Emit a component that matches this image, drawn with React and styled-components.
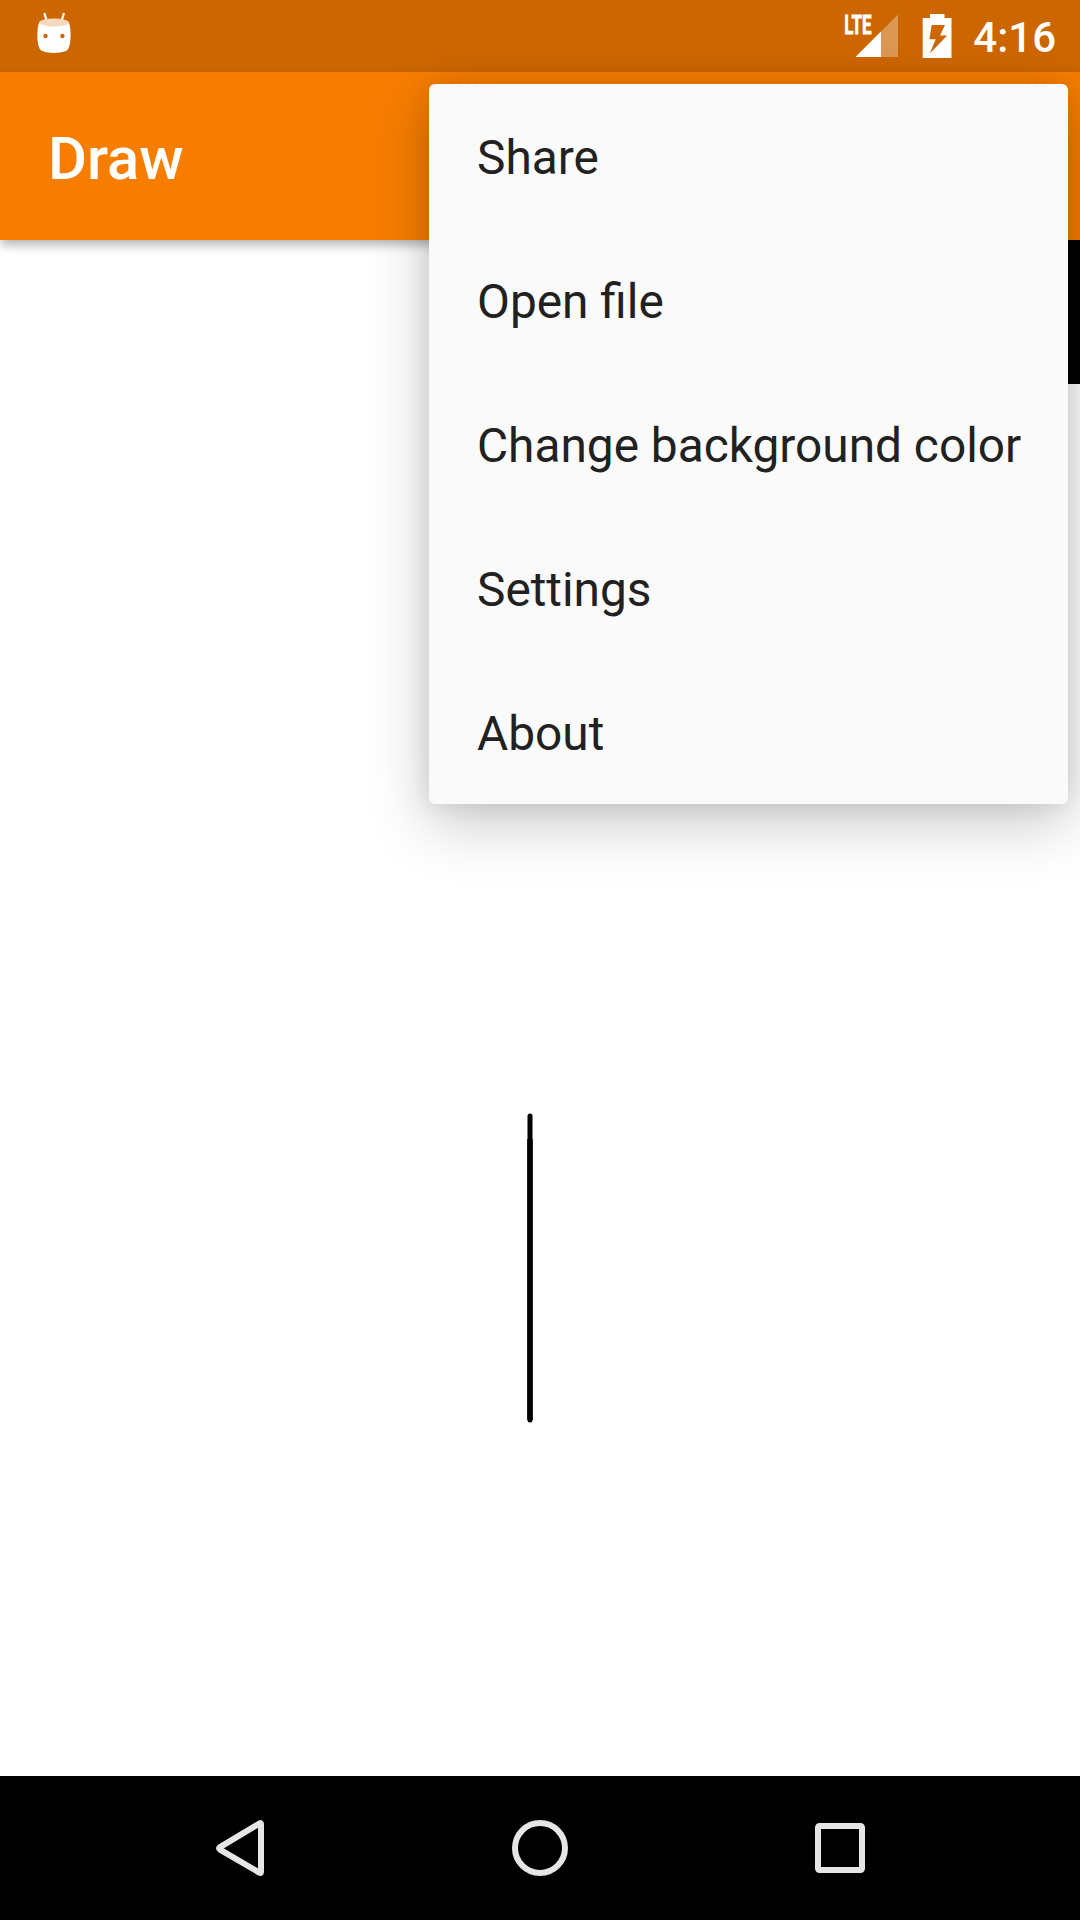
import React from 'react';
import styled, { createGlobalStyle } from 'styled-components';

const GlobalStyle = createGlobalStyle`
  * { box-sizing: border-box; }
  body { margin: 0; background: #fff; font-family: Roboto, "Liberation Sans", sans-serif; }
`;

const Screen = styled.div`
  position: relative;
  display: flex;
  flex-direction: column;
  width: 1080px;
  height: 1920px;
  overflow: hidden;
  background: #fff;
`;

const StatusBar = styled.header`
  display: flex;
  align-items: center;
  flex: 0 0 72px;
  padding: 0 24px 0 36px;
  background: #cc6600;
`;

const StatusIcons = styled.div`
  display: flex;
  align-items: center;
  margin-left: auto;
`;

const Icon = styled.svg`
  display: block;
  width: ${(p) => p.$w}px;
  height: ${(p) => p.$h}px;
  margin-right: ${(p) => p.$gap || 0}px;
`;

const Clock = styled.time`
  color: #fff;
  font-size: 42px;
  font-weight: 500;
  line-height: 68px;
  padding-top: 4px;
`;

const AppBar = styled.div`
  position: relative;
  display: flex;
  align-items: center;
  flex: 0 0 168px;
  padding: 5px 48px 0;
  background: #f77d00;
  box-shadow: 0 6px 10px -1px rgba(0, 0, 0, 0.3);
`;

const Title = styled.h1`
  margin: 0;
  color: #fff;
  font-size: 59.7px;
  font-weight: 500;
  line-height: 70px;
`;

const Workspace = styled.main`
  display: grid;
  grid-template-columns: 1fr 144px;
  grid-template-rows: 144px 1fr;
  flex: 1;
`;

const Canvas = styled.svg`
  grid-area: 1 / 1 / 3 / 3;
  width: 1080px;
  height: 1536px;
`;

const ColorSwatch = styled.div`
  grid-area: 1 / 2;
  background: #000;
`;

const NavBar = styled.nav`
  display: flex;
  justify-content: center;
  flex: 0 0 144px;
  background: #000;
`;

const NavButton = styled.button`
  display: flex;
  align-items: center;
  justify-content: center;
  width: 300px;
  padding: 0;
  border: 0;
  background: transparent;
`;

const Menu = styled.ul`
  position: absolute;
  top: 84px;
  right: 12px;
  width: 639px;
  margin: 0;
  padding: 0;
  list-style: none;
  border-radius: 6px;
  background: #fafafa;
  box-shadow: 0 19px 62px rgba(0, 0, 0, 0.22), 0 0 24px rgba(0, 0, 0, 0.1);
`;

const MenuItem = styled.li`
  display: flex;
  align-items: center;
  height: 144px;
  padding: 4px 48px 0;
  color: #212121;
  font-size: 47.8px;
  line-height: 56px;
  white-space: nowrap;
`;

const menuItems = ['Share', 'Open file', 'Change background color', 'Settings', 'About'];

function RobotIcon() {
  return (
    <Icon $w={36} $h={72} viewBox="0 0 36 72">
      <path d="M8.3 13 11 22M28 13 25.3 22" stroke="#fff" strokeWidth="2.2" fill="none" />
      <path
        d="M3.4 22C1 27 .5 40 3 47.3 3.7 49.7 5 50.5 7 51.3 13 53.4 23 53.4 29 51.3 31 50.5 32.3 49.7 33 47.3 35.5 40 35 27 32.6 22Z"
        fill="#fff"
      />
      <ellipse cx="18" cy="22.5" rx="14.8" ry="4" fill="#f5d9bd" />
      <circle cx="9.5" cy="36" r="2.2" fill="#cc6600" />
      <circle cx="26.4" cy="36" r="2.2" fill="#cc6600" />
    </Icon>
  );
}

function SignalIcon() {
  return (
    <Icon $w={56} $h={72} $gap={22} viewBox="0 0 56 72">
      <path d="M54 14.5V57H11.5Z" fill="#fff" fillOpacity=".32" />
      <path d="M37 31.5V57H11.5Z" fill="#fff" />
      <text x="0.3" y="33.7" fill="#fff" stroke="#fff" strokeWidth=".8" fontSize="25.5" fontWeight="700" fontFamily="Roboto, sans-serif" textLength="27.3" lengthAdjust="spacingAndGlyphs">
        LTE
      </text>
    </Icon>
  );
}

function BatteryIcon() {
  return (
    <Icon $w={30} $h={72} $gap={21} viewBox="0 0 30 72">
      <path
        fill="#fff"
        fillRule="evenodd"
        d="M8 14H22.5V18H29.5V58H.7V18H8ZM9.7 25 7.4 39.2H13.7L7.8 53.5 25.2 35.5H18L23 25Z"
      />
    </Icon>
  );
}

const navShapes = [
  { name: 'Back', shape: <path d="M51 16V64Q51 65.6 49.7 64.8L10 41.6Q8 40.3 10 39.1L49.7 15.2Q51 14.4 51 16Z" /> },
  { name: 'Home', shape: <circle cx="30" cy="40" r="25" /> },
  { name: 'Recents', shape: <rect x="8" y="18" width="44" height="44" rx="1.5" /> },
];

export default function App() {
  return (
    <>
      <GlobalStyle />
      <Screen>
        <StatusBar>
          <RobotIcon />
          <StatusIcons>
            <SignalIcon />
            <BatteryIcon />
            <Clock>4:16</Clock>
          </StatusIcons>
        </StatusBar>
        <AppBar>
          <Title>Draw</Title>
        </AppBar>
        <Workspace>
          <Canvas viewBox="0 0 1080 1536">
            <path d="M530 876V1180" stroke="#000" strokeWidth="5" strokeLinecap="round" />
            <path d="M530 899V1180" stroke="#000" strokeWidth="5.6" />
          </Canvas>
          <ColorSwatch />
        </Workspace>
        <NavBar>
          {navShapes.map(({ name, shape }) => (
            <NavButton key={name} aria-label={name}>
              <Icon $w={60} $h={80} viewBox="0 0 60 80" fill="none" stroke="#e6e6e6" strokeWidth="6">
                {shape}
              </Icon>
            </NavButton>
          ))}
        </NavBar>
        <Menu>
          {menuItems.map((label) => (
            <MenuItem key={label}>{label}</MenuItem>
          ))}
        </Menu>
      </Screen>
    </>
  );
}
